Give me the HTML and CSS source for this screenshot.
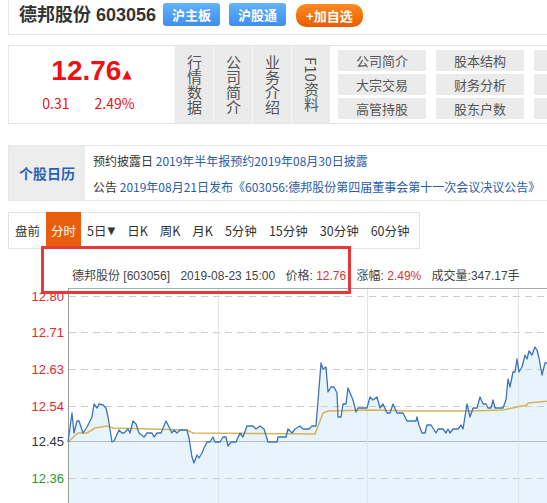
FILE: index.html
```html
<!DOCTYPE html>
<html lang="zh-CN">
<head>
<meta charset="utf-8">
<title>德邦股份 603056</title>
<link rel="stylesheet" href="styles.css">
</head>
<body>
<div class="page">
  <div class="header">
    <h1 class="title">德邦股份 603056</h1>
    <span class="btn btn-blue">沪主板</span>
    <span class="btn btn-blue">沪股通</span>
    <span class="btn btn-orange">+加自选</span>
  </div>

  <div class="quote">
    <div class="price-box">
      <div class="price">12.76<span class="arrow">▲</span></div>
      <div class="change"><span>0.31</span><span>2.49%</span></div>
    </div>
    <div class="vtab">行情数据</div>
    <div class="vtab">公司简介</div>
    <div class="vtab">业务介绍</div>
    <div class="vtab">F10资料</div>
    <div class="f10-grid">
      <span class="f10-item">公司简介</span>
      <span class="f10-item">股本结构</span>
      <span class="f10-item"></span>
      <span class="f10-item">大宗交易</span>
      <span class="f10-item">财务分析</span>
      <span class="f10-item"></span>
      <span class="f10-item">高管持股</span>
      <span class="f10-item">股东户数</span>
      <span class="f10-item"></span>
    </div>
  </div>

  <div class="calendar">
    <div class="cal-label">个股日历</div>
    <div class="cal-body">
      <div class="cal-line"><span class="cal-key">预约披露日</span> <span class="cal-val">2019年半年报预约2019年08月30日披露</span></div>
      <div class="cal-line"><span class="cal-key">公告</span> <span class="cal-val">2019年08月21日发布《603056:德邦股份第四届董事会第十一次会议决议公告》</span></div>
    </div>
  </div>

  <div class="tabs">
    <span class="tab">盘前</span>
    <span class="tab active">分时</span>
    <span class="tab">5日<span class="caret">▼</span></span>
    <span class="tab">日K</span>
    <span class="tab">周K</span>
    <span class="tab">月K</span>
    <span class="tab">5分钟</span>
    <span class="tab">15分钟</span>
    <span class="tab">30分钟</span>
    <span class="tab">60分钟</span>
  </div>

  <div class="chart">
    <div class="info">
      <span class="info-item">德邦股份 [603056]</span>
      <span class="info-item">2019-08-23 15:00</span>
      <span class="info-item">价格: <span class="up">12.76</span></span>
      <span class="info-item">涨幅: <span class="up">2.49%</span></span>
      <span class="info-item">成交量:347.17手</span>
    </div>
    <svg class="plot" width="560" height="230" viewBox="0 0 560 230" xmlns="http://www.w3.org/2000/svg">
      <g transform="translate(-8,-286)">
        <polygon fill="#e7f4fc" points="68,442 72,413 74,433 77,421 79,421 83,433 87,427 92,417 94,404 97,408 99,404 103,405 106,408 108,417 112,442 114,441 119,430 122,433 124,433 128,429 130,433 133,421 136,424 139,433 144,437 147,433 152,433 154,437 157,433 161,433 166,421 169,427 172,433 174,430 177,433 180,430 187,430 189,438 192,457 194,463 197,455 199,458 202,453 204,448 207,442 210,442 213,437 215,442 220,442 223,437 226,437 228,446 231,442 236,442 240,433 243,437 247,426 253,426 256,429 260,426 264,429 268,442 277,442 278,437 286,437 288,429 292,433 295,429 300,426 303,429 309,429 312,426 316,426 321,363 323,369 326,367 328,392 331,387 334,387 337,393 338,417 341,417 343,404 346,404 348,388 353,400 356,412 358,408 367,408 370,397 373,400 377,397 380,408 383,404 387,413 390,413 393,404 397,413 403,413 407,421 416,421 417,417 419,425 422,433 425,433 427,425 431,425 436,433 438,429 443,429 446,433 448,429 450,433 453,429 458,429 461,425 463,429 467,404 470,417 473,408 477,408 480,397 483,404 486,404 488,408 491,408 493,400 495,408 503,408 506,400 508,379 510,387 513,372 515,372 517,359 519,372 522,367 525,355 527,359 529,351 532,355 535,347 537,350 539,358 542,375 545,363 560,363 560,520 68,520"/>
        <g stroke="#cccccc" stroke-width="1" stroke-dasharray="7,5" fill="none">
          <line x1="69" y1="296.5" x2="560" y2="296.5"/>
          <line x1="69" y1="332.5" x2="560" y2="332.5"/>
          <line x1="69" y1="369.5" x2="560" y2="369.5"/>
          <line x1="69" y1="406.5" x2="560" y2="406.5"/>
          <line x1="69" y1="478.5" x2="560" y2="478.5"/>
        </g>
        <line x1="69" y1="441.5" x2="560" y2="441.5" stroke="#b4b9c0" stroke-width="1"/>
        <g stroke="#dce4ec" stroke-width="1">
          <line x1="218.5" y1="289" x2="218.5" y2="520"/>
          <line x1="367.5" y1="289" x2="367.5" y2="520"/>
          <line x1="518.5" y1="289" x2="518.5" y2="520"/>
        </g>
        <line x1="68" y1="288.5" x2="560" y2="288.5" stroke="#a9a9a9" stroke-width="1"/>
        <line x1="68.5" y1="288" x2="68.5" y2="520" stroke="#999999" stroke-width="1"/>
        <polyline fill="none" stroke="#d8b25a" stroke-width="1.5" points="68,442 78,433 87,433 95,428 107,426 113,428 187,430 193,433 315,434 323,413 328,411 370,410 410,411 470,411 503,410 517,407 527,405 528,403 560,400"/>
        <polyline fill="none" stroke="#3c74b6" stroke-width="1.3" stroke-linejoin="round" points="68,442 72,413 74,433 77,421 79,421 83,433 87,427 92,417 94,404 97,408 99,404 103,405 106,408 108,417 112,442 114,441 119,430 122,433 124,433 128,429 130,433 133,421 136,424 139,433 144,437 147,433 152,433 154,437 157,433 161,433 166,421 169,427 172,433 174,430 177,433 180,430 187,430 189,438 192,457 194,463 197,455 199,458 202,453 204,448 207,442 210,442 213,437 215,442 220,442 223,437 226,437 228,446 231,442 236,442 240,433 243,437 247,426 253,426 256,429 260,426 264,429 268,442 277,442 278,437 286,437 288,429 292,433 295,429 300,426 303,429 309,429 312,426 316,426 321,363 323,369 326,367 328,392 331,387 334,387 337,393 338,417 341,417 343,404 346,404 348,388 353,400 356,412 358,408 367,408 370,397 373,400 377,397 380,408 383,404 387,413 390,413 393,404 397,413 403,413 407,421 416,421 417,417 419,425 422,433 425,433 427,425 431,425 436,433 438,429 443,429 446,433 448,429 450,433 453,429 458,429 461,425 463,429 467,404 470,417 473,408 477,408 480,397 483,404 486,404 488,408 491,408 493,400 495,408 503,408 506,400 508,379 510,387 513,372 515,372 517,359 519,372 522,367 525,355 527,359 529,351 532,355 535,347 537,350 539,358 542,375 545,363 560,363"/>
        <g class="ylabels" font-family="Liberation Sans, Arial, sans-serif" font-size="13" text-anchor="end">
          <text x="64" y="301" fill="#e12b2b">12.80</text>
          <text x="64" y="337" fill="#e12b2b">12.71</text>
          <text x="64" y="374" fill="#e12b2b">12.63</text>
          <text x="64" y="411" fill="#e12b2b">12.54</text>
          <text x="64" y="446" fill="#333333">12.45</text>
          <text x="64" y="483" fill="#2a962a">12.36</text>
        </g>
      </g>
    </svg>
    <div class="highlight"></div>
  </div>
</div>
</body>
</html>
```

FILE: styles.css
```css
html, body {
  margin: 0;
  padding: 0;
  overflow: hidden;
  background: #ffffff;
}

body {
  font-family: "Liberation Sans", "Noto Sans CJK SC", sans-serif;
  color: #333333;
}

.page {
  padding-left: 8px;
  width: 640px;
}

/* ---------- header ---------- */
.header {
  display: flex;
  align-items: center;
  height: 35px;
  box-sizing: border-box;
  padding: 0 0 5px 10px;
  border-left: 1px solid #e6e6e6;
  border-bottom: 1px solid #e6e6e6;
}

.title {
  margin: 0 7px 0 0;
  font-size: 18px;
  font-weight: bold;
  line-height: 22px;
  color: #333333;
  font-family: "Liberation Sans", "Noto Sans CJK SC", sans-serif;
}

.btn {
  display: inline-flex;
  align-items: center;
  justify-content: center;
  height: 23px;
  padding: 0 9px;
  margin-right: 9px;
  font-size: 13px;
  font-weight: bold;
  color: #ffffff;
  font-family: "Noto Sans CJK SC", sans-serif;
  line-height: 1;
}

.btn-blue {
  border-radius: 3px;
  background: linear-gradient(#63b2fb, #3d8eee);
}

.btn-orange {
  margin-top: 2px;
  margin-left: 1px;
  margin-right: 0;
  padding: 0 10px;
  border-radius: 10px;
  background: linear-gradient(#ff8a20, #e85e00);
}

/* ---------- quote row ---------- */
.quote {
  display: flex;
  margin-top: 10px;
  height: 79px;
  box-sizing: border-box;
  border: 1px solid #e6e6e6;
}

.price-box {
  width: 165px;
  display: flex;
  flex-direction: column;
  align-items: center;
  color: #ee1111;
}

.price {
  margin-top: 10px;
  font-size: 28px;
  font-weight: bold;
  line-height: 30px;
}

.arrow {
  font-size: 12px;
  font-family: "DejaVu Sans", sans-serif;
  vertical-align: 2px;
  margin-left: 1px;
}

.change {
  margin-top: 4px;
  display: flex;
  gap: 25px;
  font-size: 14px;
  line-height: 20px;
  font-family: "Noto Sans CJK SC", sans-serif;
  margin-left: -6px;
}

.vtab {
  width: 38px;
  background: #ebebeb;
  border-left: 1px solid #f6f6f6;
  writing-mode: vertical-rl;
  display: flex;
  align-items: center;
  justify-content: center;
  font-size: 15px;
  line-height: 38px;
  color: #555555;
  font-family: "Noto Sans CJK SC", sans-serif;
}

.f10-grid {
  display: grid;
  grid-template-columns: repeat(3, 88px);
  grid-auto-rows: 21px;
  column-gap: 10px;
  row-gap: 3px;
  padding: 4px 0 0 8px;
}

.f10-item {
  background: #ebebeb;
  display: flex;
  align-items: center;
  justify-content: center;
  font-size: 13px;
  color: #555555;
  font-family: "Noto Sans CJK SC", sans-serif;
}

/* ---------- calendar ---------- */
.calendar {
  display: flex;
  margin-top: 21px;
  border: 1px solid #e8e8e8;
}

.cal-label {
  width: 76px;
  background: #ededed;
  display: flex;
  align-items: center;
  justify-content: center;
  font-size: 14px;
  font-weight: bold;
  color: #2b61b0;
  font-family: "Noto Sans CJK SC", sans-serif;
}

.cal-body {
  padding: 2px 0 0 8px;
  font-size: 12px;
  font-family: "Noto Sans CJK SC", sans-serif;
  white-space: nowrap;
}

.cal-line {
  line-height: 26px;
}

.cal-key {
  color: #333333;
}

.cal-val {
  color: #2a5ca8;
}

/* ---------- tabs ---------- */
.tabs {
  display: inline-flex;
  margin-top: 11px;
  height: 37px;
  box-sizing: border-box;
  border: 1px solid #e2e2e2;
  padding-right: 3px;
}

.tab {
  display: flex;
  align-items: center;
  padding: 0 6px;
  font-size: 12.5px;
  color: #333333;
  font-family: "Noto Sans CJK SC", sans-serif;
}

.caret {
  font-size: 10px;
  margin-left: 1px;
  font-family: "DejaVu Sans", sans-serif;
}

.tab.active {
  margin-top: -1px;
  padding: 0 5px;
  background: #ea5d0c;
  color: #ffffff;
}

/* ---------- chart ---------- */
.chart {
  position: relative;
  margin-left: -8px;
}

.info {
  height: 37px;
  box-sizing: border-box;
  padding: 19px 0 0 72px;
  font-size: 12px;
  line-height: 16px;
  color: #444444;
  white-space: nowrap;
}

.info-item {
  margin-right: 7px;
}

.up {
  color: #e42f2f;
}

.plot {
  display: block;
  margin-left: 8px;
}

.highlight {
  position: absolute;
  left: 41px;
  top: -3px;
  width: 310px;
  height: 48px;
  box-sizing: border-box;
  border: 3px solid #e53939;
}
```
